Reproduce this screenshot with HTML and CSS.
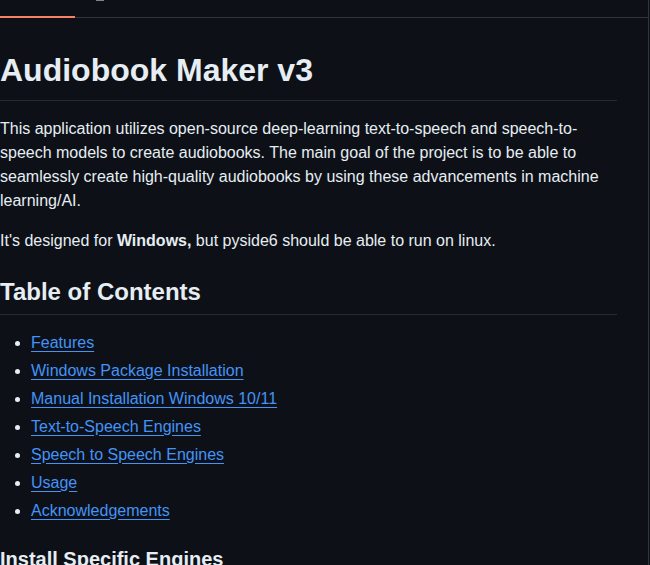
FILE: index.html
```html
<!DOCTYPE html>
<html lang="en">
<head>
    <meta charset="UTF-8">
    <title>Audiobook Maker v3</title>
    <link rel="stylesheet" href="styles.css">
</head>
<body>
<div class="frame">
    <nav class="tabs">
        <span class="tab active"></span>
        <span class="tab"><i class="tab-icon"></i></span>
    </nav>
    <article class="markdown">
        <h1>Audiobook Maker v3</h1>
        <p>This application utilizes open-source deep-learning text-to-speech and speech-to-speech models to create audiobooks. The main goal of the project is to be able to seamlessly create high-quality audiobooks by using these advancements in machine learning/AI.</p>
        <p>It's designed for <strong>Windows,</strong> but pyside6 should be able to run on linux.</p>
        <h2>Table of Contents</h2>
        <ul>
            <li><a href="#features">Features</a></li>
            <li><a href="#windows-package">Windows Package Installation</a></li>
            <li><a href="#manual-install">Manual Installation Windows 10/11</a></li>
            <li><a href="#tts">Text-to-Speech Engines</a></li>
            <li><a href="#sts">Speech to Speech Engines</a></li>
            <li><a href="#usage">Usage</a></li>
            <li><a href="#acknowledgements">Acknowledgements</a></li>
        </ul>
        <h3>Install Specific Engines</h3>
    </article>
</div>
</body>
</html>
```

FILE: styles.css
```css
html, body {
    margin: 0;
    background: #0d1117;
    overflow: hidden;
}

body {
    font-family: "Liberation Sans", Arial, sans-serif;
    font-size: 16px;
    line-height: 1.5;
    color: #e6edf3;
}

.frame {
    width: 649px;
    height: 565px;
    border-right: 1px solid #30363d;
    box-sizing: border-box;
}

.tabs {
    display: flex;
    height: 17px;
    border-bottom: 1px solid #30363d;
}

.tab {
    width: 75px;
    height: 18px;
    box-sizing: border-box;
}

.tab.active {
    border-bottom: 2px solid #f78166;
}

.tab-icon {
    display: block;
    width: 8px;
    height: 1px;
    margin-left: 21px;
    background: #7d8590;
}

.markdown {
    width: 617px;
    padding-top: 8px;
}

.markdown h1,
.markdown h2,
.markdown h3 {
    margin: 24px 0 16px;
    font-weight: 700;
    line-height: 1.25;
}

.markdown h1 {
    font-size: 2em;
    padding-bottom: .3em;
    border-bottom: 1px solid #30363db3;
}

.markdown h2 {
    font-size: 1.5em;
    padding-bottom: .3em;
    border-bottom: 1px solid #30363db3;
}

.markdown h3 {
    font-size: 1.25em;
}

.markdown p {
    margin: 0 0 16px;
}

.markdown ul {
    margin: 0 0 16px;
    padding-left: 31px;
}

.markdown li + li {
    margin-top: .25em;
}

.markdown a {
    color: #4493f8;
    text-decoration: underline;
    text-underline-offset: .2rem;
}
```
